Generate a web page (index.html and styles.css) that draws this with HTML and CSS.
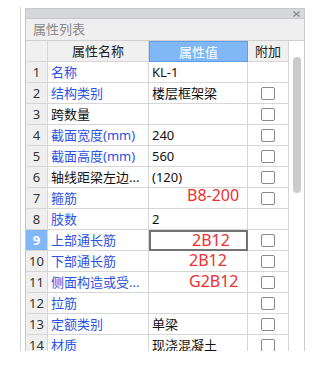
FILE: index.html
```html
<!DOCTYPE html>
<html lang="zh">
<head>
<meta charset="utf-8">
<link rel="stylesheet" href="styles.css">
</head>
<body>
<div class="wrap">
  <div class="panel">
    <div class="topbar">
      <svg class="close" width="7" height="6" viewBox="0 0 7 6"><path d="M0.5 0.5 L6.5 5.5 M6.5 0.5 L0.5 5.5" stroke="#8a8a8a" stroke-width="1.3"/></svg>
    </div>
    <div class="title">属性列表</div>
    <div class="body">
      <div class="grid">
        <div class="row head">
          <div class="c num"></div>
          <div class="c name">属性名称</div>
          <div class="c val">属性值</div>
          <div class="c add">附加</div>
        </div>
        <div class="row"><div class="c num">1</div><div class="c name blue">名称</div><div class="c val">KL-1</div><div class="c add"></div></div>
        <div class="row"><div class="c num">2</div><div class="c name blue">结构类别</div><div class="c val">楼层框架梁</div><div class="c add"><span class="cb"></span></div></div>
        <div class="row"><div class="c num">3</div><div class="c name">跨数量</div><div class="c val"></div><div class="c add"><span class="cb"></span></div></div>
        <div class="row"><div class="c num">4</div><div class="c name blue">截面宽度(mm)</div><div class="c val">240</div><div class="c add"><span class="cb"></span></div></div>
        <div class="row"><div class="c num">5</div><div class="c name blue">截面高度(mm)</div><div class="c val">560</div><div class="c add"><span class="cb"></span></div></div>
        <div class="row"><div class="c num">6</div><div class="c name">轴线距梁左边...</div><div class="c val">(120)</div><div class="c add"><span class="cb"></span></div></div>
        <div class="row"><div class="c num">7</div><div class="c name blue">箍筋</div><div class="c val"><span class="red up">B8-200</span></div><div class="c add"><span class="cb"></span></div></div>
        <div class="row"><div class="c num">8</div><div class="c name blue">肢数</div><div class="c val">2</div><div class="c add"></div></div>
        <div class="row"><div class="c num sel">9</div><div class="c name blue">上部通长筋</div><div class="c val cur"><span class="red">2B12</span></div><div class="c add"><span class="cb"></span></div></div>
        <div class="row"><div class="c num">10</div><div class="c name blue">下部通长筋</div><div class="c val"><span class="red">2B12</span></div><div class="c add"><span class="cb"></span></div></div>
        <div class="row"><div class="c num">11</div><div class="c name blue">侧面构造或受...</div><div class="c val"><span class="red">G2B12</span></div><div class="c add"><span class="cb"></span></div></div>
        <div class="row"><div class="c num">12</div><div class="c name blue">拉筋</div><div class="c val"></div><div class="c add"><span class="cb"></span></div></div>
        <div class="row"><div class="c num">13</div><div class="c name blue">定额类别</div><div class="c val">单梁</div><div class="c add"><span class="cb"></span></div></div>
        <div class="row"><div class="c num">14</div><div class="c name blue">材质</div><div class="c val">现浇混凝土</div><div class="c add"><span class="cb"></span></div></div>
      </div>
      <div class="scroll"><div class="thumb"></div></div>
    </div>
  </div>
</div>
</body>
</html>
```
FILE: styles.css
```css
* { box-sizing: border-box; }
html, body { margin: 0; padding: 0; background: #fff; }
body {
  font-family: "Noto Sans", "Noto Sans CJK SC", sans-serif;
  font-size: 13px;
  color: #111;
}
.wrap {
  margin: 7px 0 0 20px;
  height: 344px;
  border-left: 1px solid #d6d6d6;
  padding: 1px 0 0 4px;
  overflow: hidden;
}
.panel {
  width: 280px;
  height: 343px;
  border: 1px solid #c9c9c9;
  border-bottom: none;
  overflow: hidden;
  background: #fff;
}
.topbar {
  height: 10px;
  background: #d5d7db;
  border-bottom: 1px solid #c4c6ca;
  display: flex;
  justify-content: flex-end;
  align-items: center;
}
.close { margin-right: 4px; display: block; }
.title {
  height: 22px;
  background: #efefef;
  color: #8a8a8a;
  padding-left: 7px;
  line-height: 21px;
  border-bottom: 1px solid #d0d0d0;
}
.body { display: flex; }
.grid { width: 263px; }
.row { display: flex; height: 21px; }
.c {
  height: 21px;
  border-right: 1px solid #d6d6d6;
  border-bottom: 1px solid #d6d6d6;
  line-height: 20px;
  white-space: nowrap;
  overflow: hidden;
}
.num { width: 22px; background: #efefef; color: #333; text-align: center; }
.name { width: 101px; padding-left: 3px; }
.val { width: 99px; padding-left: 3px; overflow: visible; }
.add { width: 41px; display: flex; align-items: center; justify-content: center; }
.head .c { background: #f0f0f0; text-align: center; padding-left: 0; color: #222; }
.head .val { background: #80b8f7; color: #fff; border: 1px solid #5d9eea; }
.blue { color: #2c52e2; }
.sel { background: #80b8f7; color: #fff; font-weight: bold; }
.cur { border: 2px solid #737373; border-left: 2px solid #737373; line-height: 16px; }
.red {
  color: #ee3030;
  font-size: 16px;
  padding-left: 37px;
  display: inline-block;
  line-height: 19px;
}
.cur .red { padding-left: 38px; line-height: 16px; }
.up { position: relative; top: -2px; padding-left: 35px; }
.cb {
  width: 14px;
  height: 13px;
  border: 1px solid #8a8a8a;
  border-radius: 2px;
  background: #fff;
  display: block;
}
.scroll { width: 15px; padding: 16px 0 0 4px; }
.thumb { width: 8px; height: 136px; background: #cbcbcb; border-radius: 4px; }
```
